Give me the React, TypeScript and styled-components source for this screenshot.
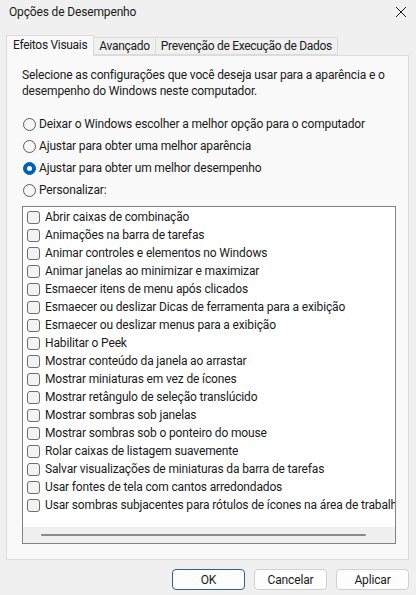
import styled, { createGlobalStyle } from "styled-components";

const GlobalStyle = createGlobalStyle`
  html, body {
    margin: 0;
    padding: 0;
    background: #f0f0f0;
  }
  * {
    box-sizing: border-box;
  }
`;

const Window = styled.div`
  width: 416px;
  height: 595px;
  background: #f0f0f0;
  font-family: Roboto, "Liberation Sans", sans-serif;
  font-size: 12px;
  letter-spacing: -0.15px;
  color: #1a1a1a;
  display: flex;
  flex-direction: column;
  overflow: hidden;
`;

const TitleBar = styled.div`
  height: 35px;
  display: flex;
  align-items: flex-start;
  justify-content: space-between;
  padding: 3px 9px 0 9px;
`;

const Title = styled.span`
  font-size: 12px;
  line-height: 18px;
  color: #1a1a1a;
`;

const CloseButton = styled.div`
  width: 12px;
  height: 12px;
  margin-top: 3px;
  display: flex;
`;

const TabRow = styled.div`
  display: flex;
  align-items: flex-end;
  padding-left: 6px;
  height: 20px;
  position: relative;
  z-index: 1;
`;

const Tab = styled.div<{ $active?: boolean }>`
  flex: none;
  height: ${(p) => (p.$active ? 21 : 18)}px;
  padding: 0 ${(p) => (p.$active ? 6 : 5)}px 0 ${(p) => (p.$active ? 6 : 5)}px;
  line-height: ${(p) => (p.$active ? 18 : 17)}px;
  letter-spacing: -0.3px;
  background: ${(p) => (p.$active ? "#f9f9f9" : "#f0f0f0")};
  border: 1px solid #dcdcdc;
  border-bottom: ${(p) => (p.$active ? "none" : "1px solid #dcdcdc")};
  border-left: ${(p) => (p.$active ? "1px solid #dcdcdc" : "none")};
  margin-bottom: ${(p) => (p.$active ? -1 : 0)}px;
  white-space: nowrap;
  color: #1a1a1a;
`;

const Panel = styled.div`
  margin: 0 7px 0 6px;
  height: 505px;
  background: #f9f9f9;
  border: 1px solid #dcdcdc;
  padding: 11px 13px 0 15px;
  display: flex;
  flex-direction: column;
`;

const Description = styled.p`
  margin: 0;
  line-height: 16px;
  width: 374px;
`;

const RadioGroup = styled.div`
  margin-top: 14px;
  display: flex;
  flex-direction: column;
`;

const RadioRow = styled.label`
  height: 22px;
  display: flex;
  align-items: center;
  gap: 3px;
  white-space: nowrap;
`;

const RadioCircle = styled.span<{ $checked?: boolean }>`
  width: 13px;
  height: 13px;
  border-radius: 50%;
  flex: none;
  margin-left: 1px;
  background: ${(p) => (p.$checked ? "#005fb8" : "#f7f7f7")};
  border: 1px solid ${(p) => (p.$checked ? "#005fb8" : "#5c5c5c")};
  display: flex;
  align-items: center;
  justify-content: center;
  &::after {
    content: "";
    display: ${(p) => (p.$checked ? "block" : "none")};
    width: 5px;
    height: 5px;
    border-radius: 50%;
    background: #ffffff;
  }
`;

const ListBox = styled.div`
  margin-top: 5px;
  height: 338px;
  width: 374px;
  background: #ffffff;
  border: 1px solid #828282;
  display: flex;
  flex-direction: column;
  overflow: hidden;
`;

const ListItems = styled.div`
  flex: 1;
  padding: 1px 0 0 4px;
  overflow: hidden;
`;

const CheckRow = styled.label`
  height: 18px;
  display: flex;
  align-items: center;
  gap: 5px;
  white-space: nowrap;
`;

const CheckBox = styled.span`
  width: 13px;
  height: 13px;
  flex: none;
  border: 1px solid #6e6e6e;
  border-radius: 3px;
  background: #f3f3f3;
`;

const HScrollBar = styled.div`
  height: 16px;
  flex: none;
  background: #f0f0f0;
  display: flex;
  align-items: center;
  padding: 0 29px 0 18px;
`;

const ScrollThumb = styled.div`
  flex: 1;
  height: 2px;
  border-radius: 1px;
  background: #8a8a8a;
`;

const Footer = styled.div`
  display: flex;
  justify-content: flex-end;
  gap: 9px;
  padding: 9px 7px 0 0;
`;

const Button = styled.button<{ $primary?: boolean }>`
  width: 73px;
  height: 21px;
  padding: 0;
  font-family: inherit;
  font-size: 12px;
  letter-spacing: inherit;
  color: #1a1a1a;
  background: #fdfdfd;
  border: 1px solid ${(p) => (p.$primary ? "#2f6190" : "#d0d0d0")};
  border-radius: 4px;
`;

const radios = [
  { label: "Deixar o Windows escolher a melhor opção para o computador" },
  { label: "Ajustar para obter uma melhor aparência" },
  { label: "Ajustar para obter um melhor desempenho", checked: true },
  { label: "Personalizar:" },
];

const effects = [
  "Abrir caixas de combinação",
  "Animações na barra de tarefas",
  "Animar controles e elementos no Windows",
  "Animar janelas ao minimizar e maximizar",
  "Esmaecer itens de menu após clicados",
  "Esmaecer ou deslizar Dicas de ferramenta para a exibição",
  "Esmaecer ou deslizar menus para a exibição",
  "Habilitar o Peek",
  "Mostrar conteúdo da janela ao arrastar",
  "Mostrar miniaturas em vez de ícones",
  "Mostrar retângulo de seleção translúcido",
  "Mostrar sombras sob janelas",
  "Mostrar sombras sob o ponteiro do mouse",
  "Rolar caixas de listagem suavemente",
  "Salvar visualizações de miniaturas da barra de tarefas",
  "Usar fontes de tela com cantos arredondados",
  "Usar sombras subjacentes para rótulos de ícones na área de trabalho",
];

export default function App() {
  return (
    <Window>
      <GlobalStyle />
      <TitleBar>
        <Title>Opções de Desempenho</Title>
        <CloseButton>
          <svg width="12" height="12" viewBox="0 0 12 12">
            <path d="M1 1L11 11M11 1L1 11" stroke="#1a1a1a" strokeWidth="1" fill="none" />
          </svg>
        </CloseButton>
      </TitleBar>
      <TabRow>
        <Tab $active>Efeitos Visuais</Tab>
        <Tab>Avançado</Tab>
        <Tab>Prevenção de Execução de Dados</Tab>
      </TabRow>
      <Panel>
        <Description>
          Selecione as configurações que você deseja usar para a aparência e o
          desempenho do Windows neste computador.
        </Description>
        <RadioGroup>
          {radios.map((r) => (
            <RadioRow key={r.label}>
              <RadioCircle $checked={r.checked} />
              {r.label}
            </RadioRow>
          ))}
        </RadioGroup>
        <ListBox>
          <ListItems>
            {effects.map((e) => (
              <CheckRow key={e}>
                <CheckBox />
                {e}
              </CheckRow>
            ))}
          </ListItems>
          <HScrollBar>
            <ScrollThumb />
          </HScrollBar>
        </ListBox>
      </Panel>
      <Footer>
        <Button $primary>OK</Button>
        <Button>Cancelar</Button>
        <Button>Aplicar</Button>
      </Footer>
    </Window>
  );
}
